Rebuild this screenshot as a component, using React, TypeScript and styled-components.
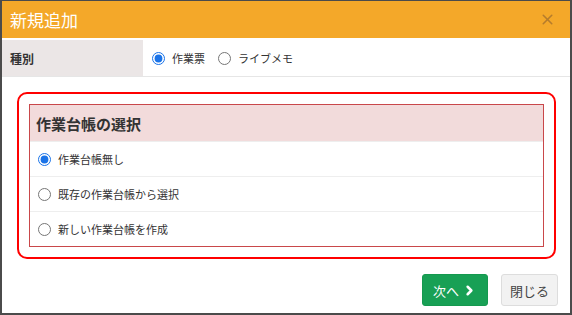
import React from 'react'
import styled, { createGlobalStyle } from 'styled-components'
import { ChevronRight, X } from 'lucide-react'

const GlobalStyle = createGlobalStyle`
  html, body {
    margin: 0;
    padding: 0;
    background: #4b4b4b;
    font-family: 'Liberation Sans', 'Noto Sans CJK JP', sans-serif;
  }
  body {
    padding: 1px 2px 2px 2px;
  }
`

export default function App() {
  return (
    <>
      <GlobalStyle />
      <Dialog>
        <Header>
          <Title>新規追加</Title>
          <CloseX>
            <X size={17} strokeWidth={2.2} />
          </CloseX>
        </Header>
        <Body>
          <FieldRow>
            <FieldLabel>種別</FieldLabel>
            <FieldValue>
              <RadioLabel>
                <Radio type='radio' name='kind' defaultChecked />
                作業票
              </RadioLabel>
              <RadioLabel>
                <Radio type='radio' name='kind' />
                ライブメモ
              </RadioLabel>
            </FieldValue>
          </FieldRow>
          <Highlight>
            <Panel>
              <PanelHeading>作業台帳の選択</PanelHeading>
              <OptionRow>
                <RadioLabel>
                  <Radio type='radio' name='ledger' defaultChecked />
                  作業台帳無し
                </RadioLabel>
              </OptionRow>
              <OptionRow>
                <RadioLabel>
                  <Radio type='radio' name='ledger' />
                  既存の作業台帳から選択
                </RadioLabel>
              </OptionRow>
              <OptionRow>
                <RadioLabel>
                  <Radio type='radio' name='ledger' />
                  新しい作業台帳を作成
                </RadioLabel>
              </OptionRow>
            </Panel>
          </Highlight>
        </Body>
        <Footer>
          <Button variant='primary'>
            次へ
            <ChevronRight size={15} strokeWidth={4} />
          </Button>
          <Button>閉じる</Button>
        </Footer>
      </Dialog>
    </>
  )
}

const Dialog = styled.div`
  width: 568px;
  height: 312px;
  background: #fff;
  display: flex;
  flex-direction: column;
`

const Header = styled.div`
  height: 37px;
  background: #f4a829;
  display: flex;
  align-items: center;
  justify-content: space-between;
  padding: 0 14px 0 8px;
`

const Title = styled.div`
  color: #fff;
  font-family: 'Noto Sans CJK JP', sans-serif;
  font-size: 17px;
  line-height: 1;
`

const CloseX = styled.div`
  color: #b57c2c;
  display: flex;
  align-items: center;
`

const Body = styled.div`
  flex: 1;
  padding-top: 2px;
`

const FieldRow = styled.div`
  display: flex;
  height: 36px;
  border-bottom: 1px solid #e6e6e6;
`

const FieldLabel = styled.div`
  width: 133px;
  background: #ebe6e6;
  display: flex;
  align-items: center;
  padding-left: 8px;
  font-family: 'Noto Sans CJK JP', sans-serif;
  font-weight: 700;
  font-size: 12px;
  color: #333;
`

const FieldValue = styled.div`
  display: flex;
  align-items: center;
  gap: 11px;
  padding-left: 7px;
`

const RadioLabel = styled.label`
  display: flex;
  align-items: center;
  gap: 4px;
  font-family: 'Noto Sans CJK JP', sans-serif;
  font-size: 11px;
  color: #333;
`

const Radio = styled.input`
  width: 13px;
  height: 13px;
  margin: 0 3px 0 2px;
  accent-color: #1a73e8;
`

const Highlight = styled.div`
  margin: 15px 14px 0 15px;
  border: 2px solid #f00;
  border-radius: 10px;
  padding: 10px;
`

const Panel = styled.div`
  border: 1px solid #c9474a;
`

const PanelHeading = styled.div`
  height: 36px;
  background: #f2dbdb;
  display: flex;
  align-items: center;
  padding-left: 6px;
  font-family: 'Noto Sans CJK JP', sans-serif;
  font-weight: 700;
  font-size: 15px;
  color: #333;
`

const OptionRow = styled.div`
  height: 35px;
  display: flex;
  align-items: center;
  padding-left: 6px;
  border-top: 1px solid #eeeeee;
  box-sizing: border-box;
`

const Footer = styled.div`
  display: flex;
  justify-content: flex-end;
  gap: 13px;
  padding: 0 12px 7px 0;
`

const Button = styled.button<{ variant?: 'primary' }>`
  height: 32px;
  display: flex;
  align-items: center;
  justify-content: center;
  gap: 3px;
  border-radius: 3px;
  font-family: 'Noto Sans CJK JP', sans-serif;
  font-size: 13px;
  padding: 0;
  white-space: nowrap;
  border: 1px solid ${(props) => (props.variant === 'primary' ? '#15994f' : '#dddddd')};
  background: ${(props) => (props.variant === 'primary' ? '#18a055' : '#f2f2f2')};
  color: ${(props) => (props.variant === 'primary' ? '#fff' : '#444')};
  width: ${(props) => (props.variant === 'primary' ? '66px' : '57px')};
`
